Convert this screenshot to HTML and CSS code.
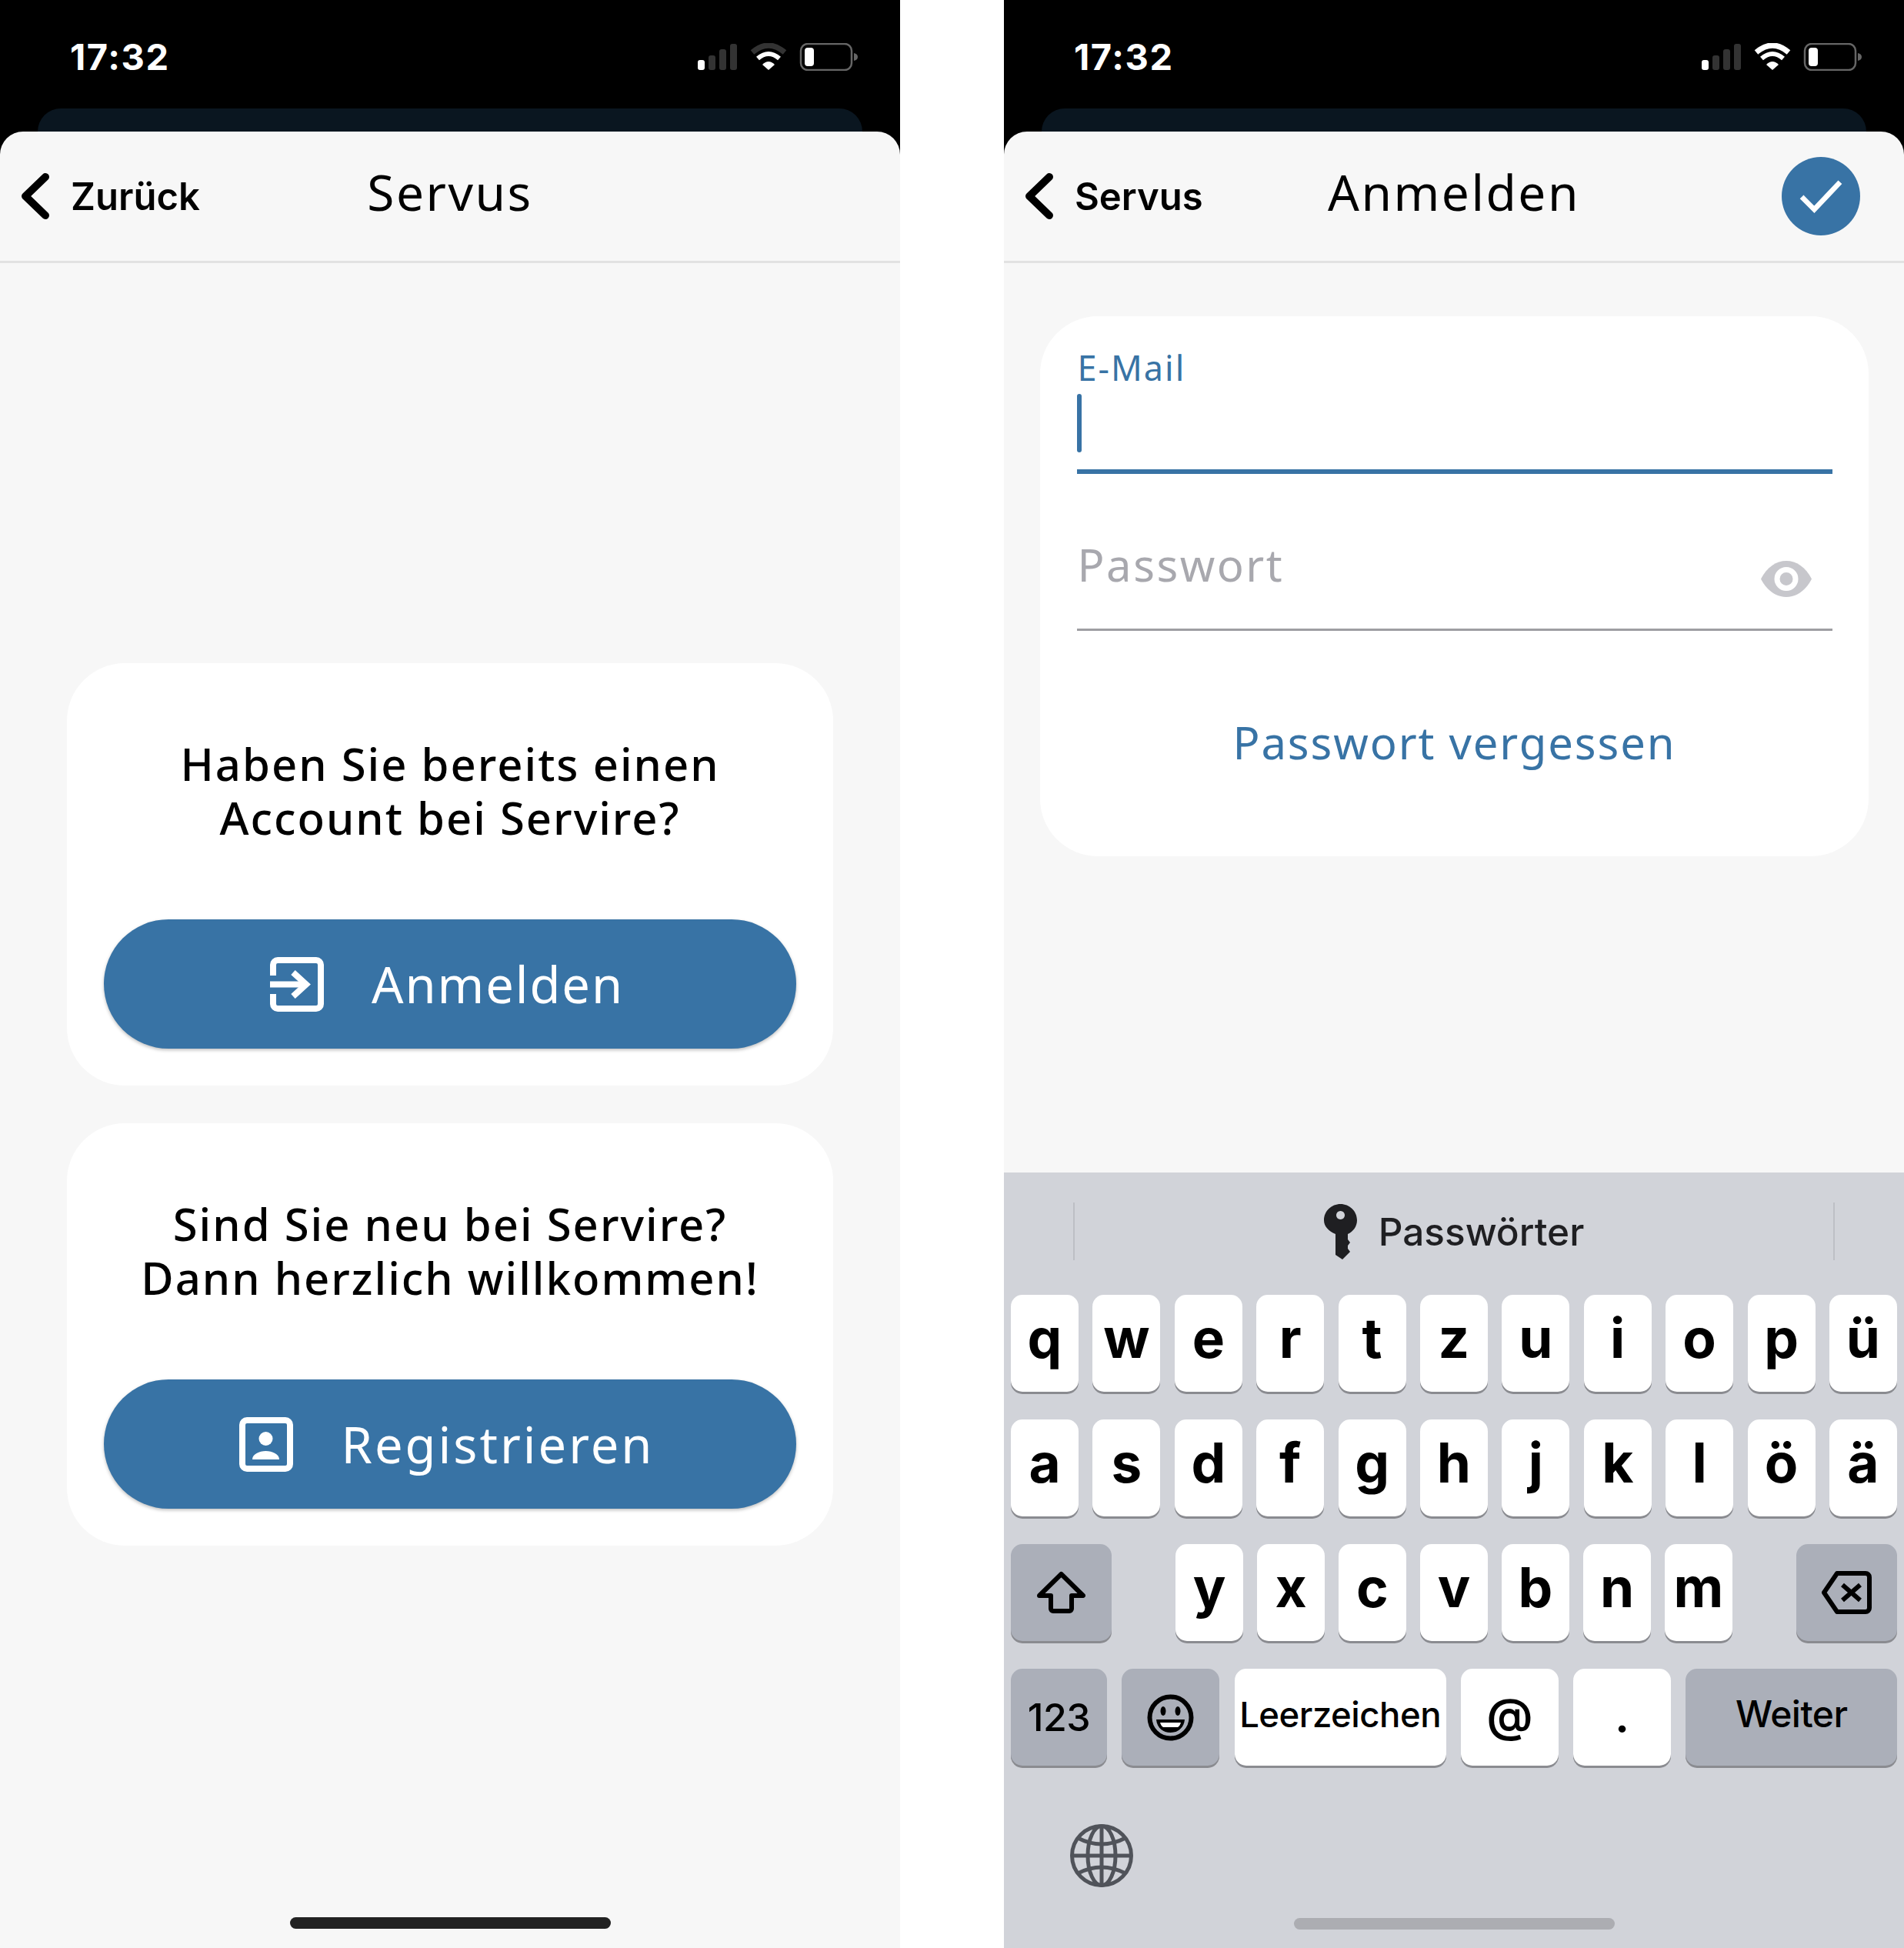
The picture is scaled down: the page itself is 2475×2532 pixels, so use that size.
FILE: index.html
```html
<!DOCTYPE html>
<html lang="de">
<head>
    <meta charset="UTF-8">
    <meta name="viewport" content="width=device-width, initial-scale=1.0">
    <title>Servire</title>
    <link rel="stylesheet" href="styles.css">
</head>
<body>
    <!-- linkes Telefon -->
    <section class="phone">
        <header class="status">
            <span class="time">17:32</span>
            <svg class="status-icons" viewBox="0 0 208 36" width="208" height="36">
                <rect x="0" y="22" width="9" height="13" rx="3" fill="#fff"/>
                <rect x="14" y="16" width="9" height="19" rx="3" fill="#333"/>
                <rect x="28" y="8" width="9" height="27" rx="3" fill="#333"/>
                <rect x="42" y="1" width="9" height="34" rx="3" fill="#333"/>
                <path d="M71 12 Q92 -6 113 12" fill="none" stroke="#333" stroke-width="7"/>
                <path d="M78 20 Q92 8 106 20" fill="none" stroke="#fff" stroke-width="6"/>
                <path d="M84 28 Q92 20 100 28 L92 35z" fill="#fff"/>
                <rect x="134" y="1" width="66" height="34" rx="9" fill="none" stroke="#666" stroke-width="2.5"/>
                <rect x="139" y="6" width="12" height="24" rx="4" fill="#fff"/>
                <path d="M203 13 Q208 14 208 18 Q208 22 203 23z" fill="#666"/>
            </svg>
        </header>
        <div class="back-sheet"></div>
        <main class="sheet">
            <nav class="navbar">
                <a class="back">
                    <svg class="chevron" viewBox="0 0 38 60" width="38" height="60"><path d="M32 5 L6 30 L32 55" fill="none" stroke="#000" stroke-width="10" stroke-linecap="round" stroke-linejoin="round"/></svg>
                    <span>Zurück</span>
                </a>
                <h1 class="title">Servus</h1>
                <span></span>
            </nav>
            <div class="welcome">
                <div class="card">
                    <div class="question">
                        <p>Haben Sie bereits einen</p>
                        <p>Account bei Servire?</p>
                    </div>
                    <a class="btn">
                        <svg viewBox="0 0 70 71" width="70" height="71" fill="none" stroke="#fff" stroke-width="8">
                            <path d="M4 24 V10 a6 6 0 0 1 6-6 H60 a6 6 0 0 1 6 6 V61 a6 6 0 0 1-6 6 H10 a6 6 0 0 1-6-6 V48"/>
                            <path d="M0 35.5 H46"/>
                            <path d="M30 20 L47 35.5 L30 51"/>
                        </svg>
                        <span>Anmelden</span>
                    </a>
                </div>
                <div class="card">
                    <div class="question">
                        <p>Sind Sie neu bei Servire?</p>
                        <p>Dann herzlich willkommen!</p>
                    </div>
                    <a class="btn long">
                        <svg viewBox="0 0 70 71" width="70" height="71">
                            <rect x="4" y="4" width="62" height="63" rx="6" fill="none" stroke="#fff" stroke-width="8"/>
                            <circle cx="34.5" cy="28" r="9" fill="#fff"/>
                            <path d="M17 55 C17 48 26 44 34.5 44 S52 48 52 55z" fill="#fff"/>
                        </svg>
                        <span>Registrieren</span>
                    </a>
                </div>
            </div>
            <div class="home-bar"></div>
        </main>
    </section>

    <!-- rechtes Telefon -->
    <section class="phone">
        <header class="status">
            <span class="time">17:32</span>
            <svg class="status-icons" viewBox="0 0 208 36" width="208" height="36">
                <rect x="0" y="22" width="9" height="13" rx="3" fill="#fff"/>
                <rect x="14" y="16" width="9" height="19" rx="3" fill="#333"/>
                <rect x="28" y="8" width="9" height="27" rx="3" fill="#333"/>
                <rect x="42" y="1" width="9" height="34" rx="3" fill="#333"/>
                <path d="M71 12 Q92 -6 113 12" fill="none" stroke="#fff" stroke-width="7"/>
                <path d="M78 20 Q92 8 106 20" fill="none" stroke="#fff" stroke-width="6"/>
                <path d="M84 28 Q92 20 100 28 L92 35z" fill="#fff"/>
                <rect x="134" y="1" width="66" height="34" rx="9" fill="none" stroke="#666" stroke-width="2.5"/>
                <rect x="139" y="6" width="12" height="24" rx="4" fill="#fff"/>
                <path d="M203 13 Q208 14 208 18 Q208 22 203 23z" fill="#666"/>
            </svg>
        </header>
        <div class="back-sheet"></div>
        <main class="sheet">
            <nav class="navbar">
                <a class="back">
                    <svg class="chevron" viewBox="0 0 38 60" width="38" height="60"><path d="M32 5 L6 30 L32 55" fill="none" stroke="#000" stroke-width="10" stroke-linecap="round" stroke-linejoin="round"/></svg>
                    <span>Servus</span>
                </a>
                <h1 class="title">Anmelden</h1>
                <a class="confirm">
                    <svg viewBox="0 0 60 48" width="58" height="46"><path d="M4 25 L21 42 L56 5" fill="none" stroke="#fff" stroke-width="7"/></svg>
                </a>
            </nav>
            <form class="login-card">
                <label class="field-label">E-Mail</label>
                <div class="caret"></div>
                <div class="line-active"></div>
                <div class="password-row">
                    <span class="placeholder">Passwort</span>
                    <svg class="eye" viewBox="0 0 66 47" width="66" height="47">
                        <path d="M0 23.5 C8 8 20 0 33 0 S58 8 66 23.5 C58 39 46 47 33 47 S8 39 0 23.5z" fill="#c7c7cc"/>
                        <circle cx="33" cy="23.5" r="12" fill="none" stroke="#fff" stroke-width="7"/>
                    </svg>
                </div>
                <a class="forgot">Passwort vergessen</a>
            </form>
            <div class="keyboard">
                <div class="suggestions">
                    <i class="divider"></i>
                    <div class="suggestion">
                        <svg viewBox="0 0 43 72" width="43" height="72">
                            <path fill-rule="evenodd" fill="#1f1f22" d="M21.5 0 C33 0 43 9 43 21 C43 29 38 36 31 39 V46 L34 50 L31 54 V58 L34 62 L24 72 L15 66 V39 C6 35 0 29 0 21 C0 9 10 0 21.5 0z M21.5 9 a5.5 5.5 0 1 0 0.01 0z"/>
                        </svg>
                        <span>Passwörter</span>
                    </div>
                    <i class="divider"></i>
                </div>
                <div class="key-row">
                    <b class="key">q</b><b class="key">w</b><b class="key">e</b><b class="key">r</b><b class="key">t</b><b class="key">z</b><b class="key">u</b><b class="key">i</b><b class="key">o</b><b class="key">p</b><b class="key">ü</b>
                </div>
                <div class="key-row">
                    <b class="key">a</b><b class="key">s</b><b class="key">d</b><b class="key">f</b><b class="key">g</b><b class="key">h</b><b class="key">j</b><b class="key">k</b><b class="key">l</b><b class="key">ö</b><b class="key">ä</b>
                </div>
                <div class="key-row-mid">
                    <span class="key dark wide">
                        <svg viewBox="0 0 63 56" width="63" height="56"><path d="M31.5 4 L60 32 H45 V49 a3 3 0 0 1-3 3 H21 a3 3 0 0 1-3-3 V32 H3z" fill="none" stroke="#000" stroke-width="6" stroke-linejoin="round"/></svg>
                    </span>
                    <div class="letters">
                        <b class="key">y</b><b class="key">x</b><b class="key">c</b><b class="key">v</b><b class="key">b</b><b class="key">n</b><b class="key">m</b>
                    </div>
                    <span class="key dark wide">
                        <svg viewBox="0 0 65 56" width="65" height="56" fill="none" stroke="#000" stroke-width="6" stroke-linejoin="round"><path d="M20 3 H57 a5 5 0 0 1 5 5 V48 a5 5 0 0 1-5 5 H20 L3 28z"/><path d="M27 18 L50 38 M50 18 L27 38"/></svg>
                    </span>
                </div>
                <div class="key-row-bottom">
                    <span class="key dark digits">123</span>
                    <span class="key dark icon">
                        <svg viewBox="0 0 61 61" width="61" height="61">
                            <circle cx="30.5" cy="30.5" r="27" fill="none" stroke="#000" stroke-width="6"/>
                            <ellipse cx="21" cy="22" rx="3.5" ry="6"/>
                            <ellipse cx="40" cy="22" rx="3.5" ry="6"/>
                            <path d="M12 33 H49 C48 44 40 50 30.5 50 S13 44 12 33z"/>
                            <path d="M17 37 H44 C43 40 42 42 40 43 H21 C19 42 18 40 17 37z" fill="#fff"/>
                        </svg>
                    </span>
                    <span class="key small">Leerzeichen</span>
                    <span class="key at">@</span>
                    <span class="key at">.</span>
                    <span class="key dark small go">Weiter</span>
                </div>
                <svg class="globe" viewBox="0 0 82 82" width="82" height="82" fill="none" stroke="#50535a" stroke-width="5">
                    <circle cx="41" cy="41" r="38.5"/>
                    <ellipse cx="41" cy="41" rx="18" ry="38.5"/>
                    <path d="M41 3 V79 M3 41 H79"/>
                    <path d="M10 18 Q41 34 72 18 M10 64 Q41 48 72 64"/>
                </svg>
                <div class="home-bar light"></div>
            </div>
        </main>
    </section>
</body>
</html>
```

FILE: styles.css
```css
body {
    margin: 0;
    width: 2475px;
    height: 2532px;
    display: flex;
    justify-content: space-between;
    background-color: #fff;
    font-family: "Noto Sans", sans-serif;
    color: #000;
    overflow: hidden;
}
.phone {
    width: 1170px;
    height: 2532px;
    background-color: #000;
    display: flex;
    flex-direction: column;
}
.status {
    height: 141px;
    flex: none;
    display: flex;
    justify-content: space-between;
    align-items: flex-start;
    padding: 0 55px 0 91px;
    box-sizing: border-box;
}
.time {
    margin-top: 47px;
    font-family: Inter, sans-serif;
    font-weight: 700;
    font-size: 47px;
    line-height: 54px;
    letter-spacing: 1.6px;
    color: #fff;
}
.status-icons {
    margin-top: 56px;
}
.back-sheet {
    height: 30px;
    flex: none;
    margin: 0 49px;
    background-color: #0a1620;
    border-radius: 30px 30px 0 0;
}
.sheet {
    flex: 1;
    display: flex;
    flex-direction: column;
    background-color: #f7f7f7;
    border-radius: 30px 30px 0 0;
    overflow: hidden;
}

/* Navigation */
.navbar {
    height: 171px;
    flex: none;
    box-sizing: border-box;
    display: grid;
    grid-template-columns: 1fr auto 1fr;
    align-items: center;
    padding: 0 27px;
    border-bottom: 3px solid #e2e2e2;
}
.back {
    display: flex;
    align-items: center;
    gap: 27px;
    font-family: Inter, sans-serif;
    font-weight: 600;
    font-size: 49px;
}
.chevron {
    flex: none;
}
.title {
    margin: 0 0 12px;
    font-weight: 400;
    font-size: 64px;
    letter-spacing: 2.5px;
}
.confirm {
    justify-self: end;
    margin-right: 30px;
    width: 102px;
    height: 102px;
    border-radius: 50%;
    background-color: #3873a5;
    display: flex;
    justify-content: center;
    align-items: center;
}

/* Startseite */
.welcome {
    flex: 1;
    display: flex;
    flex-direction: column;
    gap: 49px;
    padding: 520px 87px 0;
}
.card {
    height: 549px;
    box-sizing: border-box;
    padding: 96px 48px 0;
    background-color: #fff;
    border-radius: 75px;
}
.question {
    margin: 0 0 97px;
    text-align: center;
    font-weight: 500;
    font-size: 58px;
    letter-spacing: 2px;
}
.question p {
    margin: 0;
    height: 70px;
    line-height: 70px;
}
.btn {
    height: 168px;
    box-sizing: border-box;
    padding-right: 8px;
    display: flex;
    justify-content: center;
    align-items: center;
    gap: 62px;
    background-color: #3873a5;
    border-radius: 84px;
    box-shadow: 0 2px 4px rgba(0, 0, 0, 0.25);
    color: #fff;
    font-size: 65px;
    letter-spacing: 1.9px;
}
.btn.long {
    letter-spacing: 3px;
}
.home-bar {
    flex: none;
    width: 417px;
    height: 15px;
    margin: 0 auto 25px;
    border-radius: 8px;
    background-color: #222;
}
.home-bar.light {
    background-color: #acadb2;
    margin-top: 4px;
}

/* Anmeldeformular */
.login-card {
    width: 1077px;
    height: 702px;
    margin: 69px auto 0;
    box-sizing: border-box;
    padding: 37px 47px 0 48px;
    background-color: #fff;
    border-radius: 75px;
}
.field-label {
    display: block;
    height: 60px;
    margin-left: 1px;
    font-size: 45px;
    line-height: 60px;
    color: #3873a5;
    letter-spacing: 2px;
}
.caret {
    width: 6px;
    height: 76px;
    margin-top: 4px;
    border-radius: 3px;
    background-color: #3873a5;
}
.line-active {
    height: 6px;
    margin-top: 22px;
    background-color: #3873a5;
}
.password-row {
    height: 204px;
    box-sizing: border-box;
    display: flex;
    justify-content: space-between;
    align-items: flex-start;
    padding: 83px 27px 0 1px;
    border-bottom: 3px solid #9e9ea2;
}
.placeholder {
    font-size: 58px;
    line-height: 70px;
    color: #a8a8ae;
    letter-spacing: 2.5px;
}
.eye {
    margin-top: 30px;
}
.forgot {
    display: block;
    margin-top: 105px;
    text-align: center;
    font-size: 58px;
    line-height: 80px;
    color: #3873a5;
    letter-spacing: 1.9px;
}

/* Tastatur */
.keyboard {
    margin-top: auto;
    height: 1008px;
    flex: none;
    box-sizing: border-box;
    display: flex;
    flex-direction: column;
    gap: 36px;
    background-color: #d1d3d9;
    padding: 0 9px 0 9px;
}
.suggestions {
    height: 123px;
    flex: none;
    box-sizing: border-box;
    padding: 30px 81px 0 81px;
    display: flex;
    justify-content: space-between;
    align-items: center;
}
.divider {
    width: 2px;
    height: 75px;
    background-color: #bdbfc5;
}
.suggestion {
    display: flex;
    align-items: center;
    gap: 28px;
    font-family: Inter, sans-serif;
    font-weight: 500;
    font-size: 49.5px;
    color: #1f1f22;
}
.key-row {
    display: flex;
    justify-content: space-between;
}
.key-row .key {
    width: 88px;
}
.key-row-mid {
    display: flex;
    justify-content: space-between;
}
.letters {
    display: flex;
    gap: 18px;
}
.letters .key {
    width: 88px;
}
.key-row-bottom {
    display: grid;
    grid-template-columns: 125px 127px 275px 127px 127px 1fr;
    gap: 19.3px;
}
.key {
    height: 126px;
    box-sizing: border-box;
    padding-bottom: 14px;
    display: flex;
    justify-content: center;
    align-items: center;
    background-color: #fff;
    border-radius: 15px;
    box-shadow: 0 3px 0 #8a8b90;
    font-family: Inter, sans-serif;
    font-weight: 700;
    font-size: 71px;
}
.key.dark {
    background-color: #abafb9;
}
.key.wide {
    width: 131px;
    padding-bottom: 0;
}
.key.icon {
    padding-bottom: 0;
}
.key.digits {
    padding-bottom: 0;
    font-weight: 500;
    font-size: 50px;
    letter-spacing: -0.5px;
}
.key.small {
    padding-bottom: 8px;
    font-weight: 500;
    font-size: 45.5px;
    letter-spacing: -0.5px;
}
.key.go {
    padding-bottom: 10px;
    font-size: 48px;
}
.key.at {
    padding-bottom: 6px;
    font-weight: 600;
    font-size: 60px;
}
.globe {
    flex: none;
    margin: 40px 0 0 77px;
}
```
